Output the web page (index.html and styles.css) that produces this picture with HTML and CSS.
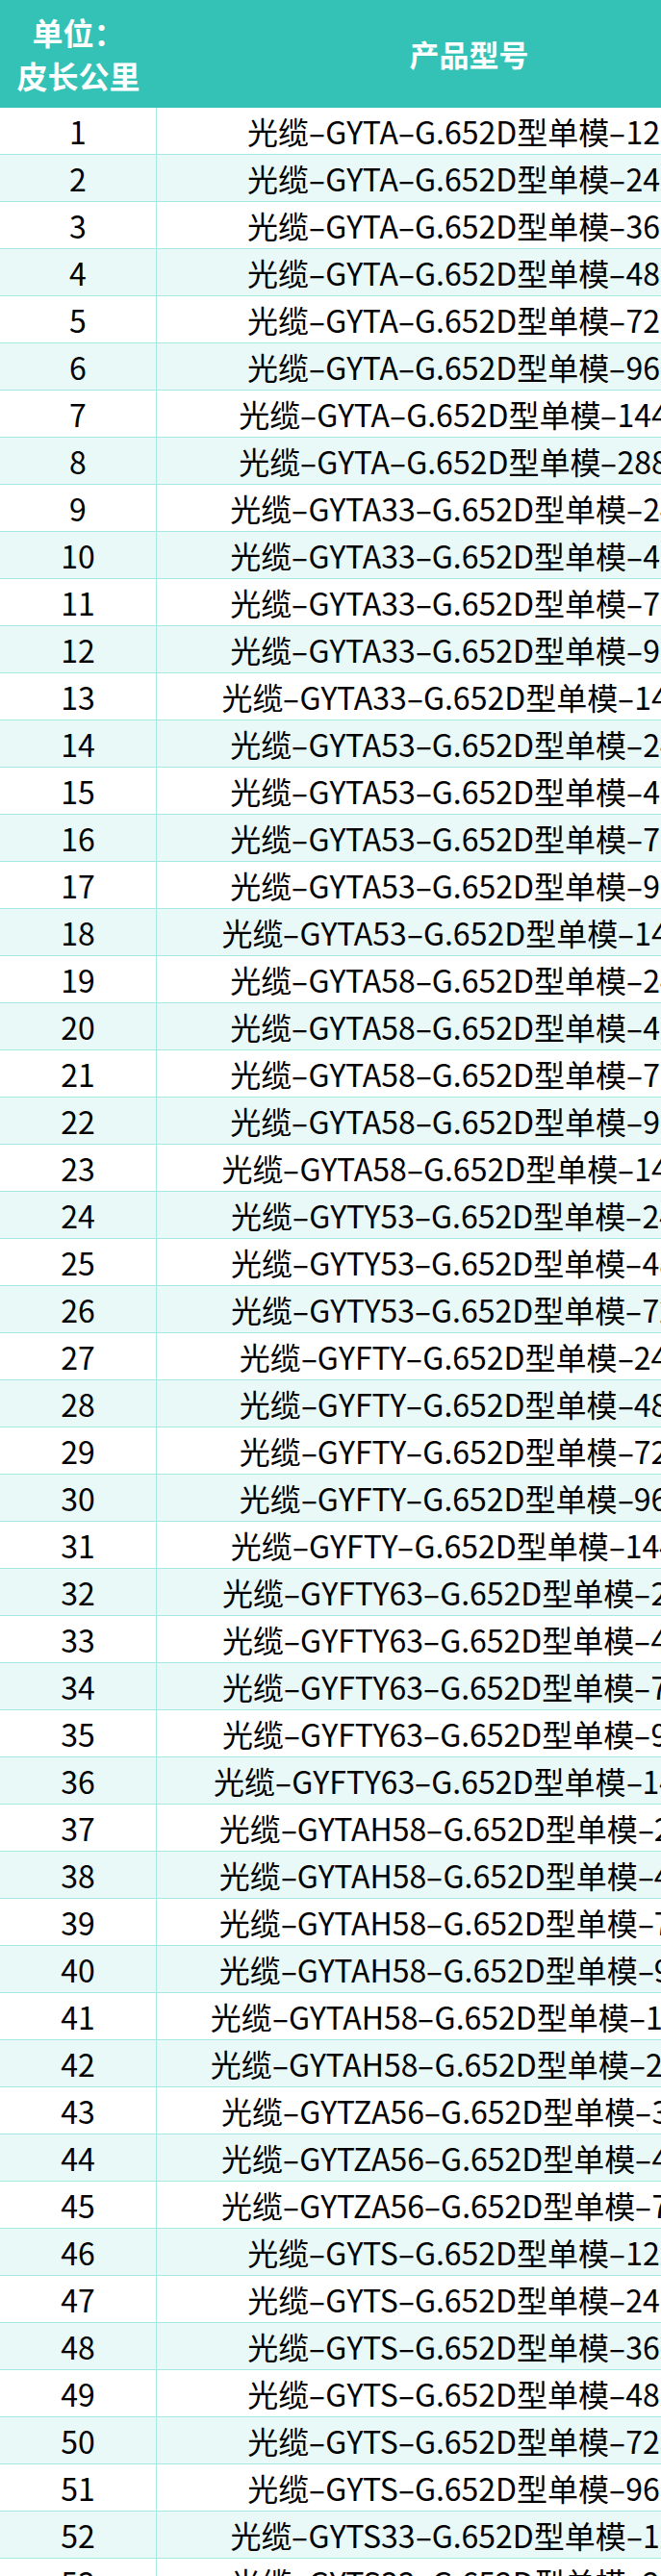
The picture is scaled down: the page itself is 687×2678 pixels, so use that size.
FILE: index.html
```html
<!DOCTYPE html>
<html lang="zh-CN">
<head>
<meta charset="utf-8">
<title>光缆产品型号</title>
<link rel="stylesheet" href="styles.css">
</head>
<body>
<div class="viewport">
  <div class="table">
    <div class="head">
      <div class="hcell unit">单位：<br>皮长公里</div>
      <div class="hcell model">产品型号</div>
    </div>
    <div class="row"><div class="num">1</div><div class="name">光缆<span class="d">-</span>GYTA<span class="d">-</span>G.652D型单模<span class="d">-</span>12芯</div></div>
    <div class="row"><div class="num">2</div><div class="name">光缆<span class="d">-</span>GYTA<span class="d">-</span>G.652D型单模<span class="d">-</span>24芯</div></div>
    <div class="row"><div class="num">3</div><div class="name">光缆<span class="d">-</span>GYTA<span class="d">-</span>G.652D型单模<span class="d">-</span>36芯</div></div>
    <div class="row"><div class="num">4</div><div class="name">光缆<span class="d">-</span>GYTA<span class="d">-</span>G.652D型单模<span class="d">-</span>48芯</div></div>
    <div class="row"><div class="num">5</div><div class="name">光缆<span class="d">-</span>GYTA<span class="d">-</span>G.652D型单模<span class="d">-</span>72芯</div></div>
    <div class="row"><div class="num">6</div><div class="name">光缆<span class="d">-</span>GYTA<span class="d">-</span>G.652D型单模<span class="d">-</span>96芯</div></div>
    <div class="row"><div class="num">7</div><div class="name">光缆<span class="d">-</span>GYTA<span class="d">-</span>G.652D型单模<span class="d">-</span>144芯</div></div>
    <div class="row"><div class="num">8</div><div class="name">光缆<span class="d">-</span>GYTA<span class="d">-</span>G.652D型单模<span class="d">-</span>288芯</div></div>
    <div class="row"><div class="num">9</div><div class="name">光缆<span class="d">-</span>GYTA33<span class="d">-</span>G.652D型单模<span class="d">-</span>24芯</div></div>
    <div class="row"><div class="num">10</div><div class="name">光缆<span class="d">-</span>GYTA33<span class="d">-</span>G.652D型单模<span class="d">-</span>48芯</div></div>
    <div class="row"><div class="num">11</div><div class="name">光缆<span class="d">-</span>GYTA33<span class="d">-</span>G.652D型单模<span class="d">-</span>72芯</div></div>
    <div class="row"><div class="num">12</div><div class="name">光缆<span class="d">-</span>GYTA33<span class="d">-</span>G.652D型单模<span class="d">-</span>96芯</div></div>
    <div class="row"><div class="num">13</div><div class="name">光缆<span class="d">-</span>GYTA33<span class="d">-</span>G.652D型单模<span class="d">-</span>144芯</div></div>
    <div class="row"><div class="num">14</div><div class="name">光缆<span class="d">-</span>GYTA53<span class="d">-</span>G.652D型单模<span class="d">-</span>24芯</div></div>
    <div class="row"><div class="num">15</div><div class="name">光缆<span class="d">-</span>GYTA53<span class="d">-</span>G.652D型单模<span class="d">-</span>48芯</div></div>
    <div class="row"><div class="num">16</div><div class="name">光缆<span class="d">-</span>GYTA53<span class="d">-</span>G.652D型单模<span class="d">-</span>72芯</div></div>
    <div class="row"><div class="num">17</div><div class="name">光缆<span class="d">-</span>GYTA53<span class="d">-</span>G.652D型单模<span class="d">-</span>96芯</div></div>
    <div class="row"><div class="num">18</div><div class="name">光缆<span class="d">-</span>GYTA53<span class="d">-</span>G.652D型单模<span class="d">-</span>144芯</div></div>
    <div class="row"><div class="num">19</div><div class="name">光缆<span class="d">-</span>GYTA58<span class="d">-</span>G.652D型单模<span class="d">-</span>24芯</div></div>
    <div class="row"><div class="num">20</div><div class="name">光缆<span class="d">-</span>GYTA58<span class="d">-</span>G.652D型单模<span class="d">-</span>48芯</div></div>
    <div class="row"><div class="num">21</div><div class="name">光缆<span class="d">-</span>GYTA58<span class="d">-</span>G.652D型单模<span class="d">-</span>72芯</div></div>
    <div class="row"><div class="num">22</div><div class="name">光缆<span class="d">-</span>GYTA58<span class="d">-</span>G.652D型单模<span class="d">-</span>96芯</div></div>
    <div class="row"><div class="num">23</div><div class="name">光缆<span class="d">-</span>GYTA58<span class="d">-</span>G.652D型单模<span class="d">-</span>144芯</div></div>
    <div class="row"><div class="num">24</div><div class="name">光缆<span class="d">-</span>GYTY53<span class="d">-</span>G.652D型单模<span class="d">-</span>24芯</div></div>
    <div class="row"><div class="num">25</div><div class="name">光缆<span class="d">-</span>GYTY53<span class="d">-</span>G.652D型单模<span class="d">-</span>48芯</div></div>
    <div class="row"><div class="num">26</div><div class="name">光缆<span class="d">-</span>GYTY53<span class="d">-</span>G.652D型单模<span class="d">-</span>72芯</div></div>
    <div class="row"><div class="num">27</div><div class="name">光缆<span class="d">-</span>GYFTY<span class="d">-</span>G.652D型单模<span class="d">-</span>24芯</div></div>
    <div class="row"><div class="num">28</div><div class="name">光缆<span class="d">-</span>GYFTY<span class="d">-</span>G.652D型单模<span class="d">-</span>48芯</div></div>
    <div class="row"><div class="num">29</div><div class="name">光缆<span class="d">-</span>GYFTY<span class="d">-</span>G.652D型单模<span class="d">-</span>72芯</div></div>
    <div class="row"><div class="num">30</div><div class="name">光缆<span class="d">-</span>GYFTY<span class="d">-</span>G.652D型单模<span class="d">-</span>96芯</div></div>
    <div class="row"><div class="num">31</div><div class="name">光缆<span class="d">-</span>GYFTY<span class="d">-</span>G.652D型单模<span class="d">-</span>144芯</div></div>
    <div class="row"><div class="num">32</div><div class="name">光缆<span class="d">-</span>GYFTY63<span class="d">-</span>G.652D型单模<span class="d">-</span>24芯</div></div>
    <div class="row"><div class="num">33</div><div class="name">光缆<span class="d">-</span>GYFTY63<span class="d">-</span>G.652D型单模<span class="d">-</span>48芯</div></div>
    <div class="row"><div class="num">34</div><div class="name">光缆<span class="d">-</span>GYFTY63<span class="d">-</span>G.652D型单模<span class="d">-</span>72芯</div></div>
    <div class="row"><div class="num">35</div><div class="name">光缆<span class="d">-</span>GYFTY63<span class="d">-</span>G.652D型单模<span class="d">-</span>96芯</div></div>
    <div class="row"><div class="num">36</div><div class="name">光缆<span class="d">-</span>GYFTY63<span class="d">-</span>G.652D型单模<span class="d">-</span>144芯</div></div>
    <div class="row"><div class="num">37</div><div class="name">光缆<span class="d">-</span>GYTAH58<span class="d">-</span>G.652D型单模<span class="d">-</span>24芯</div></div>
    <div class="row"><div class="num">38</div><div class="name">光缆<span class="d">-</span>GYTAH58<span class="d">-</span>G.652D型单模<span class="d">-</span>48芯</div></div>
    <div class="row"><div class="num">39</div><div class="name">光缆<span class="d">-</span>GYTAH58<span class="d">-</span>G.652D型单模<span class="d">-</span>72芯</div></div>
    <div class="row"><div class="num">40</div><div class="name">光缆<span class="d">-</span>GYTAH58<span class="d">-</span>G.652D型单模<span class="d">-</span>96芯</div></div>
    <div class="row"><div class="num">41</div><div class="name">光缆<span class="d">-</span>GYTAH58<span class="d">-</span>G.652D型单模<span class="d">-</span>144芯</div></div>
    <div class="row"><div class="num">42</div><div class="name">光缆<span class="d">-</span>GYTAH58<span class="d">-</span>G.652D型单模<span class="d">-</span>288芯</div></div>
    <div class="row"><div class="num">43</div><div class="name">光缆<span class="d">-</span>GYTZA56<span class="d">-</span>G.652D型单模<span class="d">-</span>36芯</div></div>
    <div class="row"><div class="num">44</div><div class="name">光缆<span class="d">-</span>GYTZA56<span class="d">-</span>G.652D型单模<span class="d">-</span>48芯</div></div>
    <div class="row"><div class="num">45</div><div class="name">光缆<span class="d">-</span>GYTZA56<span class="d">-</span>G.652D型单模<span class="d">-</span>72芯</div></div>
    <div class="row"><div class="num">46</div><div class="name">光缆<span class="d">-</span>GYTS<span class="d">-</span>G.652D型单模<span class="d">-</span>12芯</div></div>
    <div class="row"><div class="num">47</div><div class="name">光缆<span class="d">-</span>GYTS<span class="d">-</span>G.652D型单模<span class="d">-</span>24芯</div></div>
    <div class="row"><div class="num">48</div><div class="name">光缆<span class="d">-</span>GYTS<span class="d">-</span>G.652D型单模<span class="d">-</span>36芯</div></div>
    <div class="row"><div class="num">49</div><div class="name">光缆<span class="d">-</span>GYTS<span class="d">-</span>G.652D型单模<span class="d">-</span>48芯</div></div>
    <div class="row"><div class="num">50</div><div class="name">光缆<span class="d">-</span>GYTS<span class="d">-</span>G.652D型单模<span class="d">-</span>72芯</div></div>
    <div class="row"><div class="num">51</div><div class="name">光缆<span class="d">-</span>GYTS<span class="d">-</span>G.652D型单模<span class="d">-</span>96芯</div></div>
    <div class="row"><div class="num">52</div><div class="name">光缆<span class="d">-</span>GYTS33<span class="d">-</span>G.652D型单模<span class="d">-</span>12芯</div></div>
    <div class="row"><div class="num">53</div><div class="name">光缆<span class="d">-</span>GYTS33<span class="d">-</span>G.652D型单模<span class="d">-</span>24芯</div></div>
  </div>
</div>
</body>
</html>
```

FILE: styles.css
```css
html, body {
  margin: 0;
  padding: 0;
  background: #ffffff;
  overflow: hidden;
}

.viewport {
  width: 687px;
  height: 2678px;
  overflow: hidden;
}

.table {
  width: 812px;
  font-family: "Noto Sans CJK SC", "Noto Sans", sans-serif;
  color: #000000;
}

.head {
  display: flex;
  height: 111px;
  background: #33c2b5;
  border-bottom: 1px solid #33c2b5;
  color: #ffffff;
  font-weight: 700;
}

.hcell {
  display: flex;
  align-items: center;
  justify-content: center;
  text-align: center;
}

.unit {
  width: 163px;
  font-size: 32px;
  line-height: 45px;
}

.model {
  width: 649px;
  font-size: 31px;
}

.row {
  display: flex;
  height: 48px;
  border-bottom: 1px solid #a6e8e2;
  font-size: 32px;
  line-height: 48px;
}

.row:nth-child(odd) {
  background: #e9f9f8;
}

.num {
  width: 162px;
  flex: none;
  border-right: 1px solid #a6e8e2;
  text-align: center;
}

.name {
  width: 649px;
  flex: none;
  text-align: center;
  white-space: nowrap;
}

.d {
  display: inline-block;
  margin: 0 3px;
  transform: scaleX(1.7);
}
```
